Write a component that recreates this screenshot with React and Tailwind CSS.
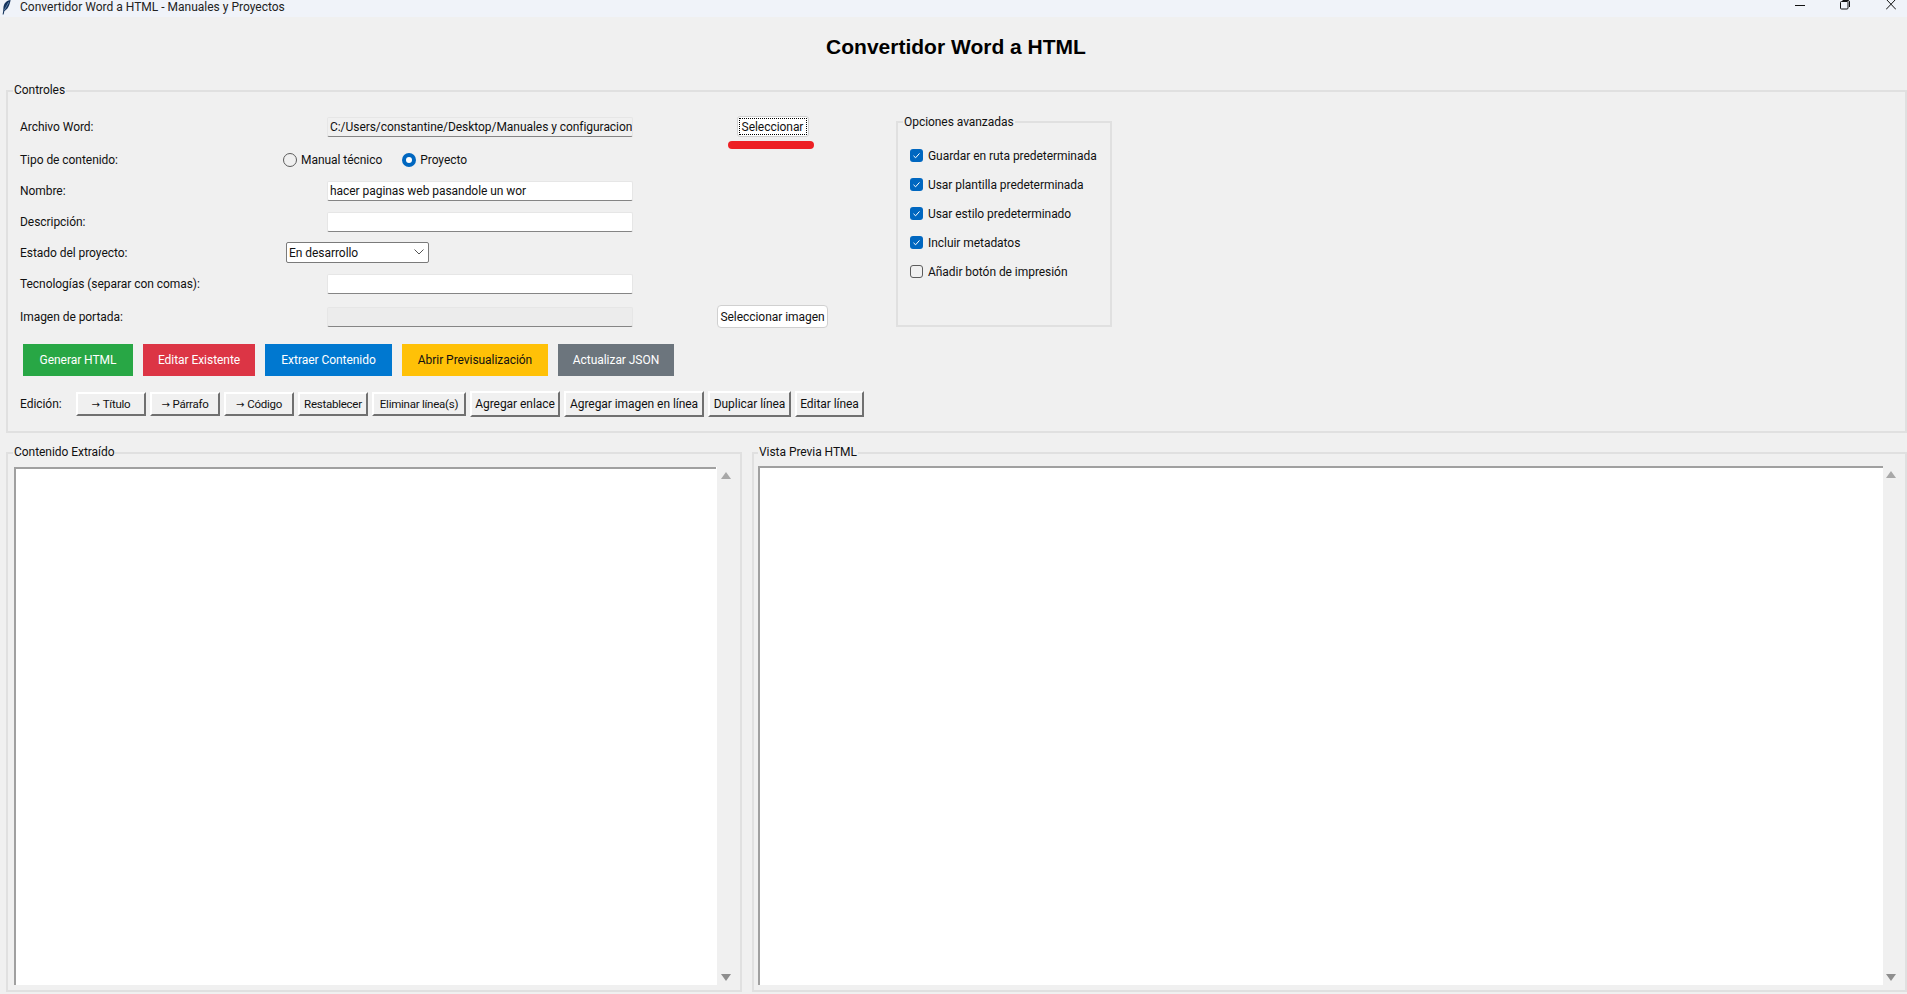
const ui = "font-['Roboto',sans-serif] text-[12px] tracking-[-0.05px] text-[#111]";

function GroupBox({ title, className, legend = "ml-[5px] leading-[14px] pb-[2px]", children }) {
  return (
    <fieldset className={`border-2 border-[#e0e0e0] min-w-0 ${className}`}>
      <legend className={`px-px ${legend}`}>{title}</legend>
      {children}
    </fieldset>
  );
}

function Field({ value, tone = "bg-white" }) {
  return (
    <div className={`w-[306px] h-[20px] flex items-center px-[2px] border border-[#e6e6e6] border-b-[#858585] rounded-[2px] whitespace-nowrap overflow-hidden ${tone}`}>
      {value}
    </div>
  );
}

function Radio({ checked, label, className }) {
  return (
    <div className={`flex items-center gap-[4px] ${className}`}>
      {checked ? (
        <span className="w-[14px] h-[14px] rounded-full bg-[#0067c0] flex items-center justify-center">
          <span className="w-[6px] h-[6px] rounded-full bg-white" />
        </span>
      ) : (
        <span className="w-[14px] h-[14px] rounded-full border border-[#5c5c5c]" />
      )}
      <span>{label}</span>
    </div>
  );
}

function Check({ checked, label }) {
  return (
    <div className="h-[29px] flex items-center gap-[5px]">
      {checked ? (
        <span className="w-[13px] h-[13px] rounded-[3px] bg-[#0067c0] flex items-center justify-center">
          <svg width="9" height="9" viewBox="0 0 9 9" fill="none" stroke="#fff" strokeWidth="1">
            <path d="M1.5 4.8 L3.6 6.8 L7.5 2.4" />
          </svg>
        </span>
      ) : (
        <span className="w-[13px] h-[13px] rounded-[3px] border border-[#5c5c5c]" />
      )}
      <span>{label}</span>
    </div>
  );
}

function EditButton({ width, tall, arrow, label }) {
  return (
    <button className={`${width} ${tall ? "h-[26px]" : "h-[24px] pt-px text-[11.5px] tracking-[-0.25px]"} flex items-center justify-center whitespace-nowrap bg-[#f0f0f0] border-2 border-t-white border-l-white border-r-[#707070] border-b-[#707070]`}>
      {arrow && <span className="mr-[3px] font-['DejaVu_Sans',sans-serif] text-[10px]">→</span>}
      {label}
    </button>
  );
}

function ScrollTrack({ className }) {
  return (
    <div className={`flex flex-col items-center justify-between pt-[5px] pb-[4px] ${className}`}>
      <span className="w-0 h-0 border-x-[5px] border-x-transparent border-b-[7px] border-b-[#a8a8a8]" />
      <span className="w-0 h-0 border-x-[5px] border-x-transparent border-t-[7px] border-t-[#8e8e8e]" />
    </div>
  );
}

export default function App() {
  return (
    <div className={`w-[1907px] h-[994px] overflow-hidden bg-[#f0f0f0] flex flex-col ${ui}`}>
      {/* Window title bar, cut off at the top */}
      <div className="h-[17px] bg-[#f0f3f9] flex items-center shrink-0">
        <svg className="ml-[2px] mb-[3px]" width="9" height="15" viewBox="0 0 9 15">
          <path d="M8.6 0 C4.5 0.5 1.6 3.5 1.4 8 L1.2 11 L0.6 14.5 L1.6 14.5 L2.4 11 C5.8 9.5 7.8 5 8.6 0 Z" fill="#14335c" />
          <path d="M6.8 2.2 L2.4 10" stroke="#8fb0d8" strokeWidth="0.6" />
        </svg>
        <span className="ml-[9px] mb-[3px] text-[#222] tracking-normal">Convertidor Word a HTML - Manuales y Proyectos</span>
        <div className="ml-auto flex items-start self-start">
          <svg className="mr-[35px] mt-[5px]" width="10" height="1">
            <rect width="10" height="1" fill="#111" />
          </svg>
          <svg className="mr-[36px]" width="10" height="10" viewBox="0 0 10 10" fill="none" stroke="#111">
            <rect x="0.5" y="1.5" width="7.5" height="7.5" rx="1" />
            <path d="M2.5 0.5 H8 Q9.5 0.5 9.5 2 V7" />
          </svg>
          <svg className="mr-[11px]" width="10" height="10" viewBox="0 0 10 10" stroke="#111">
            <path d="M0 -1 L10 9.5 M10 -1 L0 9.5" />
          </svg>
        </div>
      </div>

      <h1 className="h-[66px] shrink-0 flex items-center justify-center pb-[6px] pl-[5px] font-['Liberation_Sans',sans-serif] font-bold text-[21px] tracking-normal text-black">
        Convertidor Word a HTML
      </h1>

      <GroupBox title="Controles" className="ml-[6px] w-[1901px] h-[350px] shrink-0">
        <div className="pl-[12px] pt-[11px] grid grid-cols-[263px_44px_305px_85px_111px_68px_216px] grid-rows-[33px_34px_27px_35px_26px_37px_29px] items-center">
          <div>Archivo Word:</div>
          <div className="col-start-3"><Field value="C:/Users/constantine/Desktop/Manuales y configuracion" tone="bg-[#f0f0f0]" /></div>
          <div className="col-start-5 relative flex justify-center">
            <button className="w-[72px] h-[21px] bg-white rounded-[3px] border border-[#d0d0d0] p-[1px]">
              <span className="h-full flex items-center justify-center border border-dotted border-black">Seleccionar</span>
            </button>
            <div className="absolute left-[11px] top-[25px] w-[86px] h-[8px] rounded-full bg-[#ed2024]" />
          </div>

          <div className="col-start-7 row-start-1 row-span-7 self-start mt-[4px]">
            <GroupBox title="Opciones avanzadas" legend="ml-[5px] leading-[16px]" className="w-[216px] h-[213px]">
              <div className="pl-[12px] pt-[11px]">
                <Check checked label="Guardar en ruta predeterminada" />
                <Check checked label="Usar plantilla predeterminada" />
                <Check checked label="Usar estilo predeterminado" />
                <Check checked label="Incluir metadatos" />
                <Check label="Añadir botón de impresión" />
              </div>
            </GroupBox>
          </div>

          <div className="row-start-2">Tipo de contenido:</div>
          <div className="row-start-2 col-start-2 col-span-2 flex">
            <Radio label="Manual técnico" />
            <Radio checked label="Proyecto" className="ml-[20px]" />
          </div>

          <div className="row-start-3">Nombre:</div>
          <div className="row-start-3 col-start-3"><Field value="hacer paginas web pasandole un wor" /></div>

          <div className="row-start-4">Descripción:</div>
          <div className="row-start-4 col-start-3"><Field /></div>

          <div className="row-start-5 pt-[1px]">Estado del proyecto:</div>
          <div className="row-start-5 col-start-2 col-span-2 pl-[3px]">
            <div className="w-[143px] h-[21px] bg-white border border-[#7a7a7a] rounded-[2px] flex items-center justify-between pl-[2px] pr-[4px]">
              <span className="pt-[1px]">En desarrollo</span>
              <svg width="10" height="6" viewBox="0 0 10 6" fill="none" stroke="#555">
                <path d="M0.5 0.5 L5 5 L9.5 0.5" />
              </svg>
            </div>
          </div>

          <div className="row-start-6">Tecnologías (separar con comas):</div>
          <div className="row-start-6 col-start-3"><Field /></div>

          <div className="row-start-7">Imagen de portada:</div>
          <div className="row-start-7 col-start-3"><Field tone="bg-[#ececec]" /></div>
          <div className="row-start-7 col-start-5">
            <button className="w-[111px] h-[23px] bg-white rounded-[4px] border border-[#d0d0d0] whitespace-nowrap">Seleccionar imagen</button>
          </div>
        </div>

        <div className="mt-[13px] ml-[15px] flex gap-[10px] text-white">
          <button className="w-[110px] h-[32px] bg-[#28a745]">Generar HTML</button>
          <button className="w-[112px] h-[32px] bg-[#dc3545]">Editar Existente</button>
          <button className="w-[127px] h-[32px] bg-[#0078d0]">Extraer Contenido</button>
          <button className="w-[146px] h-[32px] bg-[#ffc107] text-[#111]">Abrir Previsualización</button>
          <button className="w-[116px] h-[32px] bg-[#6c757d]">Actualizar JSON</button>
        </div>

        <div className="mt-[15px] ml-[12px] h-[26px] flex items-center gap-[4px]">
          <span className="w-[52px]">Edición:</span>
          <EditButton width="w-[70px]" arrow label="Título" />
          <EditButton width="w-[70px]" arrow label="Párrafo" />
          <EditButton width="w-[70px]" arrow label="Código" />
          <EditButton width="w-[70px]" label="Restablecer" />
          <EditButton width="w-[94px]" label="Eliminar línea(s)" />
          <EditButton width="w-[90px]" tall label="Agregar enlace" />
          <EditButton width="w-[140px]" tall label="Agregar imagen en línea" />
          <EditButton width="w-[83px]" tall label="Duplicar línea" />
          <EditButton width="w-[69px]" tall label="Editar línea" />
        </div>
      </GroupBox>

      <div className="mt-[12px] ml-[6px] h-[547px] flex gap-[10px] shrink-0">
        <GroupBox title="Contenido Extraído" className="w-[736px] h-full">
          <div className="h-[518px] ml-[6px] mt-[6px] flex">
            <div className="w-[702px] bg-white border-t-2 border-l-2 border-[#a0a0a0]" />
            <div className="w-[1px] bg-white" />
            <ScrollTrack className="flex-1 pr-[6px]" />
          </div>
        </GroupBox>
        <GroupBox title="Vista Previa HTML" legend="ml-[4px] leading-[14px] pb-[2px]" className="w-[1155px] h-full">
          <div className="h-[519px] ml-[4px] mt-[5px] flex">
            <div className="w-[1125px] bg-white border-t-2 border-l-2 border-[#a0a0a0]" />
            <ScrollTrack className="flex-1 pr-[7px]" />
          </div>
        </GroupBox>
      </div>
    </div>
  );
}
